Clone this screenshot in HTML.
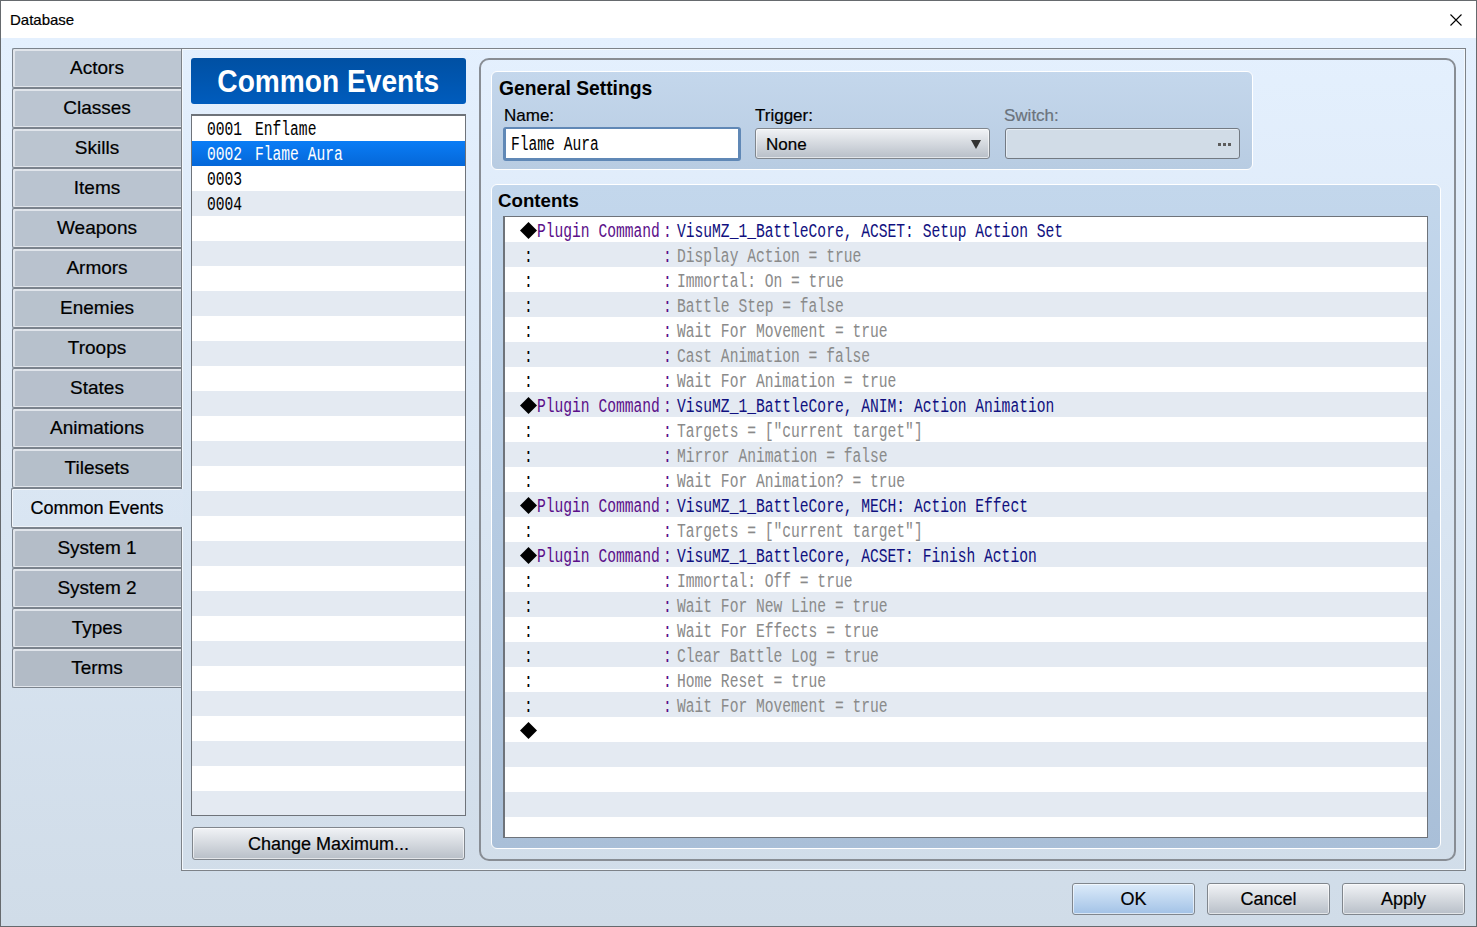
<!DOCTYPE html><html><head><meta charset="utf-8"><title>Database</title><style>
*{margin:0;padding:0;box-sizing:border-box}
html,body{width:1477px;height:927px;overflow:hidden;background:#fff}
body{position:relative;font-family:"Liberation Sans",sans-serif;color:#000}
.tab,.btn,.lbl,#title{-webkit-text-stroke:0.2px currentColor}
.mono{-webkit-text-stroke:0.05px currentColor}
.abs{position:absolute}
#win{position:absolute;left:0;top:0;width:1477px;height:927px;border:1px solid #666a6e;background:#fff}
#title{position:absolute;left:9px;top:10px;font-size:15px;color:#000}
#main{position:absolute;left:1px;top:38px;width:1475px;height:888px;background:linear-gradient(#e4f0fe 0%,#dae6f3 50%,#d0dce8 100%)}
.tab{position:absolute;left:12px;width:169px;height:40px;border:1px solid #7b838d;border-right:none;border-radius:2px 0 0 2px;
 background:#bdc6d2;box-shadow:inset 2px 2px 0 #e1e5eb, inset 0 -1px 0 #e1e5eb;font-size:19px;text-align:center;line-height:37px}
.tab.sel{left:11px;width:171px;background:transparent;border-color:#7b838d;box-shadow:inset 1px 1px 0 #f3f7fc, inset 0 -1px 0 #eef3f9;z-index:3}
#panel{position:absolute;left:181px;top:48px;width:1285px;height:823px;border:1px solid #7d8288;box-shadow:inset 1px 1px 0 #f3f8fd, inset -1px -1px 0 #f3f8fd}
#hdr{position:absolute;left:191px;top:58px;width:275px;height:46px;border-radius:3px;background:linear-gradient(#0050a3,#005cbd);
 color:#fff;font-weight:bold;font-size:31px;text-align:center;line-height:48px}
.list{position:absolute;background:#fff;overflow:hidden}
.row{position:absolute;left:0;right:0;height:25px}
.g{background:#e4eaf2}
.mono{font-family:"Liberation Mono",monospace;font-size:20px;white-space:pre;position:absolute;transform-origin:0 0;transform:scaleX(0.731);line-height:25px}
#selrow{background:linear-gradient(#0a7df6,#0567d8)}
.btn{position:absolute;border:1px solid #80868d;border-radius:3px;background:linear-gradient(#f1f3f6,#b8bfc8);box-shadow:inset 0 0 0 1px rgba(255,255,255,0.6);
 font-size:18px;text-align:center}
#grp{position:absolute;left:479px;top:58px;width:977px;height:803px;border:2px solid #888d94;border-radius:10px}
.box{position:absolute;border:1px solid #fff;border-radius:6px}
.lbl{position:absolute;font-size:17px}
.bold{font-weight:bold;font-size:19.3px;position:absolute}
</style></head><body>
<div id="win">
<div id="title">Database</div>
<svg class="abs" style="left:1448px;top:12px" width="14" height="14" viewBox="0 0 14 14"><path d="M1.5 1.5L12.5 12.5M12.5 1.5L1.5 12.5" stroke="#000" stroke-width="1.1"/></svg>
</div>
<div id="main"></div>
<div id="panel"></div>
<div class="tab" style="top:48px;background:#bcc6d2">Actors</div>
<div class="tab" style="top:88px;background:#bbc5d1">Classes</div>
<div class="tab" style="top:128px;background:#bbc5d0">Skills</div>
<div class="tab" style="top:168px;background:#bac4d0">Items</div>
<div class="tab" style="top:208px;background:#b9c3cf">Weapons</div>
<div class="tab" style="top:248px;background:#b9c2ce">Armors</div>
<div class="tab" style="top:288px;background:#b8c2cd">Enemies</div>
<div class="tab" style="top:328px;background:#b7c1cc">Troops</div>
<div class="tab" style="top:368px;background:#b7c0cc">States</div>
<div class="tab" style="top:408px;background:#b6bfcb">Animations</div>
<div class="tab" style="top:448px;background:#b5bfca">Tilesets</div>
<div class="tab sel" style="top:488px;font-size:18px;line-height:38px">Common Events</div>
<div class="tab" style="top:528px;background:#b4bdc8">System 1</div>
<div class="tab" style="top:568px;background:#b3bcc8">System 2</div>
<div class="tab" style="top:608px;background:#b3bcc7">Types</div>
<div class="tab" style="top:648px;background:#b2bbc6">Terms</div>
<div class="abs" style="left:180px;top:489px;width:3px;height:38px;background:linear-gradient(#dbe6f3,#dae5f2);z-index:4"></div>
<div id="hdr"><span style="display:inline-block;transform:scaleX(0.907)">Common Events</span></div>
<div class="abs" style="left:191px;top:114px;width:275px;height:702px;border:1px solid #6e737a;border-top-width:2px;background:#fff"></div>
<div class="list" style="left:192px;top:116px;width:273px;height:699px">
<div class="row" style="top:0px"></div>
<div class="row" id="selrow" style="top:25px"></div>
<div class="row" style="top:50px"></div>
<div class="row g" style="top:75px"></div>
<div class="row" style="top:100px"></div>
<div class="row g" style="top:125px"></div>
<div class="row" style="top:150px"></div>
<div class="row g" style="top:175px"></div>
<div class="row" style="top:200px"></div>
<div class="row g" style="top:225px"></div>
<div class="row" style="top:250px"></div>
<div class="row g" style="top:275px"></div>
<div class="row" style="top:300px"></div>
<div class="row g" style="top:325px"></div>
<div class="row" style="top:350px"></div>
<div class="row g" style="top:375px"></div>
<div class="row" style="top:400px"></div>
<div class="row g" style="top:425px"></div>
<div class="row" style="top:450px"></div>
<div class="row g" style="top:475px"></div>
<div class="row" style="top:500px"></div>
<div class="row g" style="top:525px"></div>
<div class="row" style="top:550px"></div>
<div class="row g" style="top:575px"></div>
<div class="row" style="top:600px"></div>
<div class="row g" style="top:625px"></div>
<div class="row" style="top:650px"></div>
<div class="row g" style="top:675px"></div>
<div class="mono" style="left:15px;top:1px;color:#000">0001</div>
<div class="mono" style="left:63px;top:1px;color:#000">Enflame</div>
<div class="mono" style="left:15px;top:26px;color:#fff">0002</div>
<div class="mono" style="left:63px;top:26px;color:#fff">Flame Aura</div>
<div class="mono" style="left:15px;top:51px;color:#000">0003</div>
<div class="mono" style="left:15px;top:76px;color:#000">0004</div>
</div>
<div class="btn" style="left:192px;top:827px;width:273px;height:33px;line-height:33px">Change Maximum...</div>
<div id="grp"></div>
<div class="box" style="left:491px;top:71px;width:762px;height:99px;background:linear-gradient(#c4d7ec,#b8cce2)"></div>
<div class="bold" style="left:499px;top:78px">General Settings</div>
<div class="lbl" style="left:504px;top:106px">Name:</div>
<div class="lbl" style="left:755px;top:106px">Trigger:</div>
<div class="lbl" style="left:1004px;top:106px;color:#6b737c">Switch:</div>
<div class="abs" style="left:503px;top:127px;width:238px;height:34px;border:solid #6088b6;border-width:2px 3px 3px 3px;border-radius:3px;background:#fff"></div>
<div class="mono" style="left:511px;top:132px">Flame Aura</div>
<div class="btn" style="left:755px;top:128px;width:235px;height:31px;text-align:left;font-size:17px;line-height:32px;padding-left:10px">None</div>
<svg class="abs" style="left:971px;top:140px" width="10" height="9"><path d="M0 0H10L5 9Z" fill="#333"/></svg>
<div class="abs" style="left:1005px;top:128px;width:235px;height:31px;border:1px solid #737a83;border-radius:3px;background:#d1dce7;box-shadow:inset 1px 1px 0 #e6edf4"></div>
<div class="abs" style="left:1218px;top:143px;width:3px;height:3px;background:#5c5c5c"></div>
<div class="abs" style="left:1223px;top:143px;width:3px;height:3px;background:#5c5c5c"></div>
<div class="abs" style="left:1228px;top:143px;width:3px;height:3px;background:#5c5c5c"></div>
<div class="box" style="left:491px;top:184px;width:950px;height:665px;background:linear-gradient(#c3d7ec,#a9bfd8)"></div>
<div class="bold" style="left:498px;top:190px;font-size:18.7px">Contents</div>
<div class="abs" style="left:503px;top:216px;width:925px;height:622px;border:1px solid #6e737a;border-left-width:2px;background:#fff"></div>
<div class="list" style="left:505px;top:217px;width:922px;height:620px">
<div class="row" style="top:0px"></div>
<div class="row g" style="top:25px"></div>
<div class="row" style="top:50px"></div>
<div class="row g" style="top:75px"></div>
<div class="row" style="top:100px"></div>
<div class="row g" style="top:125px"></div>
<div class="row" style="top:150px"></div>
<div class="row g" style="top:175px"></div>
<div class="row" style="top:200px"></div>
<div class="row g" style="top:225px"></div>
<div class="row" style="top:250px"></div>
<div class="row g" style="top:275px"></div>
<div class="row" style="top:300px"></div>
<div class="row g" style="top:325px"></div>
<div class="row" style="top:350px"></div>
<div class="row g" style="top:375px"></div>
<div class="row" style="top:400px"></div>
<div class="row g" style="top:425px"></div>
<div class="row" style="top:450px"></div>
<div class="row g" style="top:475px"></div>
<div class="row" style="top:500px"></div>
<div class="row g" style="top:525px"></div>
<div class="row" style="top:550px"></div>
<div class="row g" style="top:575px"></div>
<div class="row" style="top:600px"></div>
<svg class="abs" style="left:15px;top:5px" width="17" height="17" viewBox="0 0 17 17"><path d="M8.5 0L17 8.5L8.5 17L0 8.5Z" fill="#000"/></svg>
<div class="mono" style="left:32px;top:2px;color:#5b0f8a">Plugin Command</div>
<div class="mono" style="left:158px;top:2px;color:#5b0f8a">:</div>
<div class="mono" style="left:172px;top:2px;color:#101080">VisuMZ_1_BattleCore, ACSET: Setup Action Set</div>
<div class="mono" style="left:19px;top:27px;color:#000">:</div>
<div class="mono" style="left:158px;top:27px;color:#5b0f8a">:</div>
<div class="mono" style="left:172px;top:27px;color:#8a8a8a">Display Action = true</div>
<div class="mono" style="left:19px;top:52px;color:#000">:</div>
<div class="mono" style="left:158px;top:52px;color:#5b0f8a">:</div>
<div class="mono" style="left:172px;top:52px;color:#8a8a8a">Immortal: On = true</div>
<div class="mono" style="left:19px;top:77px;color:#000">:</div>
<div class="mono" style="left:158px;top:77px;color:#5b0f8a">:</div>
<div class="mono" style="left:172px;top:77px;color:#8a8a8a">Battle Step = false</div>
<div class="mono" style="left:19px;top:102px;color:#000">:</div>
<div class="mono" style="left:158px;top:102px;color:#5b0f8a">:</div>
<div class="mono" style="left:172px;top:102px;color:#8a8a8a">Wait For Movement = true</div>
<div class="mono" style="left:19px;top:127px;color:#000">:</div>
<div class="mono" style="left:158px;top:127px;color:#5b0f8a">:</div>
<div class="mono" style="left:172px;top:127px;color:#8a8a8a">Cast Animation = false</div>
<div class="mono" style="left:19px;top:152px;color:#000">:</div>
<div class="mono" style="left:158px;top:152px;color:#5b0f8a">:</div>
<div class="mono" style="left:172px;top:152px;color:#8a8a8a">Wait For Animation = true</div>
<svg class="abs" style="left:15px;top:180px" width="17" height="17" viewBox="0 0 17 17"><path d="M8.5 0L17 8.5L8.5 17L0 8.5Z" fill="#000"/></svg>
<div class="mono" style="left:32px;top:177px;color:#5b0f8a">Plugin Command</div>
<div class="mono" style="left:158px;top:177px;color:#5b0f8a">:</div>
<div class="mono" style="left:172px;top:177px;color:#101080">VisuMZ_1_BattleCore, ANIM: Action Animation</div>
<div class="mono" style="left:19px;top:202px;color:#000">:</div>
<div class="mono" style="left:158px;top:202px;color:#5b0f8a">:</div>
<div class="mono" style="left:172px;top:202px;color:#8a8a8a">Targets = [&quot;current target&quot;]</div>
<div class="mono" style="left:19px;top:227px;color:#000">:</div>
<div class="mono" style="left:158px;top:227px;color:#5b0f8a">:</div>
<div class="mono" style="left:172px;top:227px;color:#8a8a8a">Mirror Animation = false</div>
<div class="mono" style="left:19px;top:252px;color:#000">:</div>
<div class="mono" style="left:158px;top:252px;color:#5b0f8a">:</div>
<div class="mono" style="left:172px;top:252px;color:#8a8a8a">Wait For Animation? = true</div>
<svg class="abs" style="left:15px;top:280px" width="17" height="17" viewBox="0 0 17 17"><path d="M8.5 0L17 8.5L8.5 17L0 8.5Z" fill="#000"/></svg>
<div class="mono" style="left:32px;top:277px;color:#5b0f8a">Plugin Command</div>
<div class="mono" style="left:158px;top:277px;color:#5b0f8a">:</div>
<div class="mono" style="left:172px;top:277px;color:#101080">VisuMZ_1_BattleCore, MECH: Action Effect</div>
<div class="mono" style="left:19px;top:302px;color:#000">:</div>
<div class="mono" style="left:158px;top:302px;color:#5b0f8a">:</div>
<div class="mono" style="left:172px;top:302px;color:#8a8a8a">Targets = [&quot;current target&quot;]</div>
<svg class="abs" style="left:15px;top:330px" width="17" height="17" viewBox="0 0 17 17"><path d="M8.5 0L17 8.5L8.5 17L0 8.5Z" fill="#000"/></svg>
<div class="mono" style="left:32px;top:327px;color:#5b0f8a">Plugin Command</div>
<div class="mono" style="left:158px;top:327px;color:#5b0f8a">:</div>
<div class="mono" style="left:172px;top:327px;color:#101080">VisuMZ_1_BattleCore, ACSET: Finish Action</div>
<div class="mono" style="left:19px;top:352px;color:#000">:</div>
<div class="mono" style="left:158px;top:352px;color:#5b0f8a">:</div>
<div class="mono" style="left:172px;top:352px;color:#8a8a8a">Immortal: Off = true</div>
<div class="mono" style="left:19px;top:377px;color:#000">:</div>
<div class="mono" style="left:158px;top:377px;color:#5b0f8a">:</div>
<div class="mono" style="left:172px;top:377px;color:#8a8a8a">Wait For New Line = true</div>
<div class="mono" style="left:19px;top:402px;color:#000">:</div>
<div class="mono" style="left:158px;top:402px;color:#5b0f8a">:</div>
<div class="mono" style="left:172px;top:402px;color:#8a8a8a">Wait For Effects = true</div>
<div class="mono" style="left:19px;top:427px;color:#000">:</div>
<div class="mono" style="left:158px;top:427px;color:#5b0f8a">:</div>
<div class="mono" style="left:172px;top:427px;color:#8a8a8a">Clear Battle Log = true</div>
<div class="mono" style="left:19px;top:452px;color:#000">:</div>
<div class="mono" style="left:158px;top:452px;color:#5b0f8a">:</div>
<div class="mono" style="left:172px;top:452px;color:#8a8a8a">Home Reset = true</div>
<div class="mono" style="left:19px;top:477px;color:#000">:</div>
<div class="mono" style="left:158px;top:477px;color:#5b0f8a">:</div>
<div class="mono" style="left:172px;top:477px;color:#8a8a8a">Wait For Movement = true</div>
<svg class="abs" style="left:15px;top:505px" width="17" height="17" viewBox="0 0 17 17"><path d="M8.5 0L17 8.5L8.5 17L0 8.5Z" fill="#000"/></svg>
</div>
<div class="btn" style="left:1072px;top:883px;width:123px;height:32px;line-height:30px;background:linear-gradient(#dcebfa,#a2c2e6)">OK</div>
<div class="btn" style="left:1207px;top:883px;width:123px;height:32px;line-height:30px">Cancel</div>
<div class="btn" style="left:1342px;top:883px;width:123px;height:32px;line-height:30px">Apply</div>
</body></html>
